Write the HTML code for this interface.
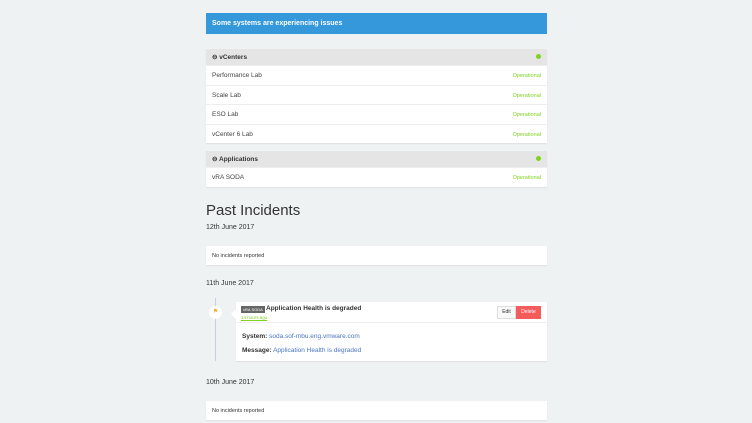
<!DOCTYPE html>
<html><head><style>
*{box-sizing:border-box;margin:0;padding:0}
body{width:752px;height:423px;overflow:hidden;background:#eff2f3;font-family:"Liberation Sans",sans-serif;color:#333;position:relative}
.abs{position:absolute}
.banner{left:206px;top:13px;width:341px;height:21px;background:#3498db;color:#fff;font-size:7px;font-weight:bold;padding:7px 6px}
.box{left:206px;width:341px;background:#fff;box-shadow:0 1px 1px rgba(0,0,0,.08)}
.hd{height:16px;background:#e5e5e5;font-size:6.5px;font-weight:bold;padding:4px 6px;position:relative}
.dot{position:absolute;right:6px;top:5px;width:5px;height:5px;border-radius:50%;background:#7ed321}
.row{height:19.5px;border-top:1px solid #eee;font-size:6.5px;color:#444;padding:6px 6px;position:relative}
.row span{position:absolute;right:6px;top:7px;color:#7ed321;font-size:5.5px}
h2{position:absolute;left:206px;top:202px;font-size:15px;font-weight:normal;color:#333}
.date{position:absolute;left:206px;font-size:7px;color:#333}
.none{position:absolute;left:206px;width:341px;height:19px;background:#fff;font-size:5.5px;padding:7px 6px;box-shadow:0 1px 1px rgba(0,0,0,.08)}
</style></head><body>
<div class="abs banner">Some systems are experiencing issues</div>
<div class="abs box" style="top:49px">
<div class="hd">⊖ vCenters<div class="dot"></div></div>
<div class="row">Performance Lab<span>Operational</span></div>
<div class="row">Scale Lab<span>Operational</span></div>
<div class="row">ESO Lab<span>Operational</span></div>
<div class="row">vCenter 6 Lab<span>Operational</span></div>
</div>
<div class="abs box" style="top:151px">
<div class="hd">⊖ Applications<div class="dot"></div></div>
<div class="row">vRA SODA<span>Operational</span></div>
</div>
<h2>Past Incidents</h2>
<div class="date" style="top:224px">12th June 2017</div>
<div class="none" style="top:246px">No incidents reported</div>
<div class="date" style="top:280px">11th June 2017</div>
<div class="abs" style="left:215px;top:298px;width:1px;height:63px;background:#c9cde6"></div>
<div class="abs" style="left:209px;top:306px;width:13px;height:13px;border-radius:50%;background:#fff;color:#f5a623;font-size:6px;text-align:center;line-height:13px">⚑</div>
<div class="abs" style="left:231px;top:309px;width:0;height:0;border:5px solid transparent;border-right-color:#fff;border-left:0"></div>
<div class="abs" style="left:236px;top:302px;width:311px;height:59px;background:#fff;box-shadow:0 1px 1px rgba(0,0,0,.08)">
<div style="height:21px;border-bottom:1px solid #eee;position:relative">
<span style="position:absolute;left:5px;top:4px;background:#666;color:#fff;font-size:4px;padding:1px 2px">vRA SODA</span>
<span style="position:absolute;left:30px;top:3px;font-size:6.5px;font-weight:bold">Application Health is degraded</span>
<span style="position:absolute;left:5px;top:13px;font-size:4.5px;color:#7ed321;text-decoration:underline">14 hours ago</span>
<span style="position:absolute;left:261px;top:4px;width:19px;height:13px;border:1px solid #ddd;font-size:5px;text-align:center;line-height:11px;background:#f9f9f9">Edit</span>
<span style="position:absolute;left:280px;top:4px;width:25px;height:13px;background:#f45b5b;color:#fff;font-size:5px;text-align:center;line-height:13px">Delete</span>
</div>
<div style="position:absolute;left:6px;top:31px;font-size:6.5px"><b>System:</b> <span style="color:#4a76c4">soda.sof-mbu.eng.vmware.com</span></div>
<div style="position:absolute;left:6px;top:45px;font-size:6.5px"><b>Message:</b> <span style="color:#4a76c4">Application Health is degraded</span></div>
</div>
<div class="date" style="top:379px">10th June 2017</div>
<div class="none" style="top:401px">No incidents reported</div>
</body></html>
